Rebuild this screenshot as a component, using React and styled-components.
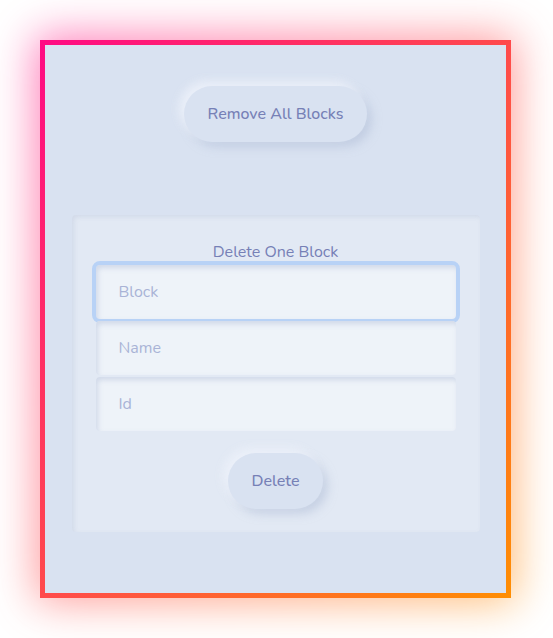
import React from 'react';
import styled, { createGlobalStyle } from 'styled-components';

const GlobalStyle = createGlobalStyle`
    body {
        margin: 0;
        background: #ffffff;
        font-family: "Nunito", "Lato", "Open Sans", sans-serif;
    }
`;

const Page = styled.div`
    min-height: 638px;
    box-sizing: border-box;
    padding: 40px 0 40px 40px;
    isolation: isolate;
`;

const Frame = styled.div`
    position: relative;
    width: 471px;
    height: 558px;
    box-sizing: border-box;
    padding: 5px;
    background: linear-gradient(to bottom right, #ff0a84, #ff4a4c 50%, #ff8e02);

    &::before {
        content: '';
        position: absolute;
        inset: -4px;
        background: inherit;
        filter: blur(22px);
        opacity: 0.55;
        z-index: -1;
    }
`;

const Inner = styled.div`
    height: 100%;
    box-sizing: border-box;
    background: #d9e2f1;
    display: flex;
    flex-direction: column;
    align-items: center;
    padding-top: 41px;
`;

const PillButton = styled.button`
    height: 56px;
    padding: 0 ${props => props.$pad}px;
    border: none;
    border-radius: 28px;
    background: #d9e2f1;
    color: #7680b6;
    font-family: inherit;
    font-size: 16px;
    font-weight: 500;
    cursor: pointer;
    box-shadow: -5px -5px 10px rgba(236, 241, 250, 0.9), 5px 5px 10px rgba(176, 189, 215, 0.55);
`;

const Panel = styled.div`
    margin-top: 73px;
    width: 408px;
    box-sizing: border-box;
    padding: 26px 24px 23px;
    background: #e2e9f4;
    border-radius: 4px;
    box-shadow: inset 2px 2px 4px rgba(190, 200, 220, 0.45);
    display: flex;
    flex-direction: column;
    align-items: center;
`;

const Title = styled.div`
    color: #7680b6;
    font-size: 16px;
    line-height: 22px;
    margin-bottom: 2px;
`;

const Fields = styled.div`
    display: flex;
    flex-direction: column;
    gap: 2px;
    width: 360px;
    margin-bottom: 22px;
`;

const Input = styled.input`
    height: 54px;
    box-sizing: border-box;
    border: none;
    border-radius: 4px;
    padding: 0 23px;
    background: #eef3f9;
    color: #7680b6;
    font-family: inherit;
    font-size: 16px;
    outline: ${props => (props.$focused ? '4px solid #b8d2f6' : 'none')};
    box-shadow: inset 2px 3px 5px rgba(196, 206, 226, 0.7);

    &::placeholder {
        color: #a9b3d6;
    }
`;

export default function App() {
    return (
        <Page>
            <GlobalStyle />
            <Frame>
                <Inner>
                    <PillButton $pad={24}>Remove All Blocks</PillButton>
                    <Panel>
                        <Title>Delete One Block</Title>
                        <Fields>
                            <Input placeholder="Block" $focused />
                            <Input placeholder="Name" />
                            <Input placeholder="Id" />
                        </Fields>
                        <PillButton $pad={24}>Delete</PillButton>
                    </Panel>
                </Inner>
            </Frame>
        </Page>
    );
}
